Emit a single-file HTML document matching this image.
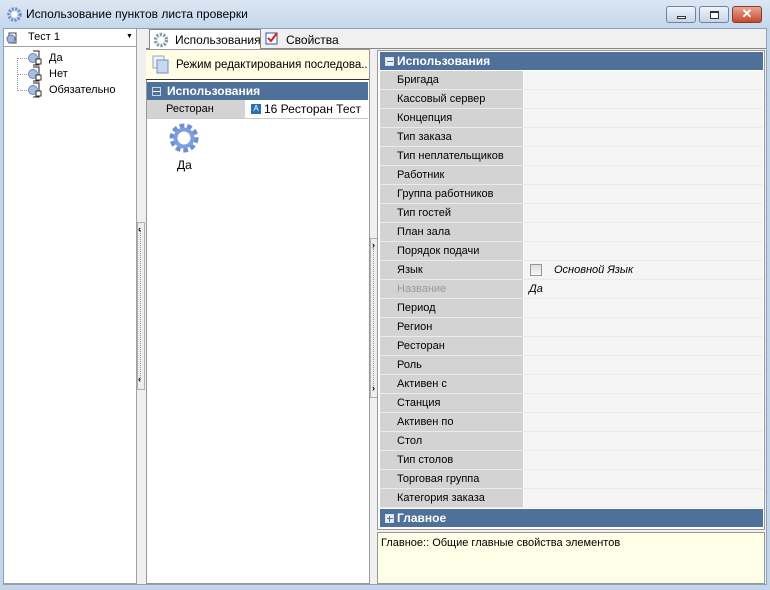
<!DOCTYPE html>
<html><head><meta charset="utf-8"><style>
*{box-sizing:border-box;margin:0;padding:0}
body{width:770px;height:590px;overflow:hidden;font-family:"Liberation Sans",sans-serif;font-size:11px;color:#000;background:#c4d6ea;position:relative}
.abs{position:absolute}
.title{left:0;top:0;width:770px;height:28px;background:linear-gradient(#dbe6f3,#c6d8ec);}
.title span{position:absolute;left:26px;top:7px;font-size:12px}
.btn{top:6px;height:17px;border:1px solid #6d83a0;border-radius:3px;background:linear-gradient(#eef3fa,#c7d5e8)}
.client{left:3px;top:28px;width:764px;height:557px;background:#f0f0f0;border:1px solid #8ba0bc}
.row{position:absolute;left:380px;width:383px;height:19px;border-bottom:1px solid #ebebeb}
.row .l{position:absolute;left:0;top:0;width:143px;height:18px;background:#d3d3d3;padding-left:17px;line-height:19px;font-size:11px}
.row .v{position:absolute;left:144px;top:0;width:239px;height:18px;background:#f5f5f5}
.hdr{position:absolute;background:#4f7099;color:#fff;font-weight:bold;font-size:12px;line-height:18px}
.box{display:inline-block;width:9px;height:9px;background:#fff;border:1px solid #d9e2ec;position:absolute;left:5px;top:5px}
</style></head><body>
<div class="abs title">
<svg class="abs" style="left:7px;top:7px" width="15" height="15" viewBox="0 0 16 16"><circle cx="8" cy="8" r="6" fill="none" stroke="#6f8fc8" stroke-width="3.5" stroke-dasharray="2.2 1.4"/><circle cx="8" cy="8" r="3" fill="#fff"/></svg>
<span>Использование пунктов листа проверки</span>
<div class="abs btn" style="left:666px;width:30px"><div class="abs" style="left:10px;top:9px;width:9px;height:3px;border:1px solid #333;background:#fff"></div></div>
<div class="abs btn" style="left:699px;width:30px"><div class="abs" style="left:10px;top:4px;width:9px;height:8px;border:1px solid #333;border-top-width:2px;background:#fff"></div></div>
<div class="abs btn" style="left:732px;width:30px;background:linear-gradient(#e8a593,#c8482e);border-color:#8a3a2a;color:#fff;font-weight:bold;text-align:center;line-height:14px;font-size:13px">✕</div>
</div>
<div class="abs client"></div>
<!-- left panel -->
<div class="abs" style="left:4px;top:29px;width:133px;height:555px;background:#fff;border-right:1px solid #a0a0a0;border-bottom:1px solid #a0a0a0"></div>
<div class="abs" style="left:4px;top:46px;width:133px;height:1px;background:#a0a0a0"></div>
<svg class="abs" style="left:6px;top:31px" width="14" height="14"><path d="M3 2h7v10H3z" fill="#fff" stroke="#444"/><circle cx="5" cy="8" r="4" fill="#9db5dc" stroke="#5a78a8"/></svg>
<div class="abs" style="left:28px;top:31px;font-size:11px">Тест 1</div>
<div class="abs" style="left:126px;top:33px;font-size:7px">▼</div>
<div class="abs" style="left:17px;top:58px;width:1px;height:33px;border-left:1px dotted #999"></div>
<div class="abs" style="left:17px;top:58px;width:12px;border-top:1px dotted #999"></div>
<div class="abs" style="left:17px;top:74px;width:12px;border-top:1px dotted #999"></div>
<div class="abs" style="left:17px;top:90px;width:12px;border-top:1px dotted #999"></div>
<svg class="abs" style="left:27px;top:50px" width="18" height="50"><g id="n"><path d="M6 1h6v14H6" fill="none" stroke="#222"/><circle cx="6" cy="8" r="4.5" fill="#a9bde0" stroke="#6a86b8"/><rect x="9" y="9" width="5" height="5" fill="#fff" stroke="#333"/></g><use href="#n" y="16"/><use href="#n" y="32"/></svg>
<div class="abs" style="left:49px;top:52px">Да</div>
<div class="abs" style="left:49px;top:68px">Нет</div>
<div class="abs" style="left:49px;top:84px">Обязательно</div>
<!-- splitter left -->
<div class="abs" style="left:137px;top:222px;width:8px;height:168px;border:1px solid #b0b0b0;background:#eee"></div>
<div class="abs" style="left:140px;top:230px;height:150px;border-left:1px dotted #999"></div>
<div class="abs" style="left:138px;top:224px;font-size:9px;font-weight:bold">‹</div>
<div class="abs" style="left:138px;top:374px;font-size:9px;font-weight:bold">‹</div>
<!-- tabs -->
<div class="abs" style="left:146px;top:48px;width:620px;height:1px;background:#888"></div>
<div class="abs" style="left:149px;top:29px;width:112px;height:20px;background:#fff;border:1px solid #888;border-bottom:none"></div>
<svg class="abs" style="left:153px;top:32px" width="16" height="16" viewBox="0 0 16 16"><circle cx="8" cy="8" r="5.5" fill="none" stroke="#8a9ab0" stroke-width="3.5" stroke-dasharray="2.2 1.3"/></svg>
<div class="abs" style="left:175px;top:33px;font-size:12px">Использования</div>
<svg class="abs" style="left:265px;top:31px" width="14" height="14"><rect x="1" y="2" width="11" height="11" fill="#fff" stroke="#3554a0"/><path d="M3 7l3 3 6-8" fill="none" stroke="#d02020" stroke-width="2"/></svg>
<div class="abs" style="left:286px;top:33px;font-size:12px">Свойства</div>
<!-- middle -->
<div class="abs" style="left:146px;top:49px;width:224px;height:535px;background:#fff;border:1px solid #999"></div>
<div class="abs" style="left:146px;top:50px;width:223px;height:30px;background:#fffde4;border-bottom:1px solid #333"></div>
<svg class="abs" style="left:151px;top:54px" width="20" height="22"><rect x="2" y="2" width="11" height="12" fill="#eef3fa" stroke="#8fa8c8"/><rect x="6" y="6" width="11" height="13" fill="#c5d8f0" stroke="#6f92c0"/></svg>
<div class="abs" style="left:176px;top:59px;font-size:11.5px;width:192px;white-space:nowrap;overflow:hidden">Режим редактирования последова...</div>
<div class="hdr" style="left:147px;top:82px;width:221px;height:18px"><span class="box" style="border-color:#c8d4e4;background:#4f7099"></span><div class="abs" style="left:6px;top:9px;width:7px;height:1px;background:#fff"></div><span style="position:absolute;left:20px">Использования</span></div>
<div class="abs" style="left:147px;top:100px;width:98px;height:18px;background:#d3d3d3;padding-left:19px;line-height:19px;font-size:11px">Ресторан</div>
<div class="abs" style="left:251px;top:104px;width:10px;height:10px;background:#2a70b8;color:#fff;font-size:8px;text-align:center;line-height:10px">A</div>
<div class="abs" style="left:264px;top:102px;font-size:12px">16 Ресторан Тест</div>
<div class="abs" style="left:147px;top:118px;width:221px;height:1px;background:#ccc"></div>
<svg class="abs" style="left:168px;top:122px" width="32" height="32" viewBox="0 0 32 32"><circle cx="16" cy="16" r="11" fill="none" stroke="#6c8fd6" stroke-width="7" stroke-dasharray="4.2 2.6"/><circle cx="16" cy="16" r="8.5" fill="none" stroke="#7d9fe0" stroke-width="4"/><ellipse cx="16" cy="16" rx="4" ry="5" fill="#fff"/></svg>
<div class="abs" style="left:177px;top:158px;font-size:12px">Да</div>
<!-- splitter right -->
<div class="abs" style="left:370px;top:238px;width:8px;height:160px;border:1px solid #b0b0b0;background:#eee"></div>
<div class="abs" style="left:373px;top:248px;height:140px;border-left:1px dotted #999"></div>
<div class="abs" style="left:372px;top:240px;font-size:9px;font-weight:bold">›</div>
<div class="abs" style="left:372px;top:383px;font-size:9px;font-weight:bold">›</div>
<!-- right grid -->
<div class="abs" style="left:377px;top:50px;width:388px;height:480px;background:#fff;border:1px solid #999"></div>
<div class="hdr" style="left:380px;top:52px;width:383px;height:18px"><span class="box" style="background:#e8eef6"></span><div class="abs" style="left:7px;top:9px;width:6px;height:1px;background:#4f7099"></div><span style="position:absolute;left:17px">Использования</span></div>
<div class="row" style="top:71px"><div class="l">Бригада</div><div class="v"></div></div>
<div class="row" style="top:90px"><div class="l">Кассовый сервер</div><div class="v"></div></div>
<div class="row" style="top:109px"><div class="l">Концепция</div><div class="v"></div></div>
<div class="row" style="top:128px"><div class="l">Тип заказа</div><div class="v"></div></div>
<div class="row" style="top:147px"><div class="l">Тип неплательщиков</div><div class="v"></div></div>
<div class="row" style="top:166px"><div class="l">Работник</div><div class="v"></div></div>
<div class="row" style="top:185px"><div class="l">Группа работников</div><div class="v"></div></div>
<div class="row" style="top:204px"><div class="l">Тип гостей</div><div class="v"></div></div>
<div class="row" style="top:223px"><div class="l">План зала</div><div class="v"></div></div>
<div class="row" style="top:242px"><div class="l">Порядок подачи</div><div class="v"></div></div>
<div class="row" style="top:261px"><div class="l">Язык</div><div class="v"><div class="abs" style="left:6px;top:3px;width:12px;height:12px;border:1px solid #999;background:linear-gradient(#ddd,#f8f8f8)"></div><div class="abs" style="left:30px;top:3px;font-style:italic;font-size:11px">Основной Язык</div></div></div>
<div class="row" style="top:280px"><div class="l" style="color:#999">Название</div><div class="v"><div class="abs" style="left:5px;top:3px;font-style:italic;font-size:11px">Да</div></div></div>
<div class="row" style="top:299px"><div class="l">Период</div><div class="v"></div></div>
<div class="row" style="top:318px"><div class="l">Регион</div><div class="v"></div></div>
<div class="row" style="top:337px"><div class="l">Ресторан</div><div class="v"></div></div>
<div class="row" style="top:356px"><div class="l">Роль</div><div class="v"></div></div>
<div class="row" style="top:375px"><div class="l">Активен с</div><div class="v"></div></div>
<div class="row" style="top:394px"><div class="l">Станция</div><div class="v"></div></div>
<div class="row" style="top:413px"><div class="l">Активен по</div><div class="v"></div></div>
<div class="row" style="top:432px"><div class="l">Стол</div><div class="v"></div></div>
<div class="row" style="top:451px"><div class="l">Тип столов</div><div class="v"></div></div>
<div class="row" style="top:470px"><div class="l">Торговая группа</div><div class="v"></div></div>
<div class="row" style="top:489px"><div class="l">Категория заказа</div><div class="v"></div></div>
<div class="hdr" style="left:380px;top:509px;width:383px;height:18px"><span class="box" style="background:#e8eef6"></span><div class="abs" style="left:7px;top:9px;width:6px;height:1px;background:#4f7099"></div><div class="abs" style="left:9px;top:7px;width:1px;height:6px;background:#4f7099"></div><span style="position:absolute;left:17px">Главное</span></div>
<div class="abs" style="left:377px;top:532px;width:388px;height:52px;background:#fffee6;border:1px solid #999;padding:4px 3px;font-size:11px">Главное:: Общие главные свойства элементов</div>
</body></html>
